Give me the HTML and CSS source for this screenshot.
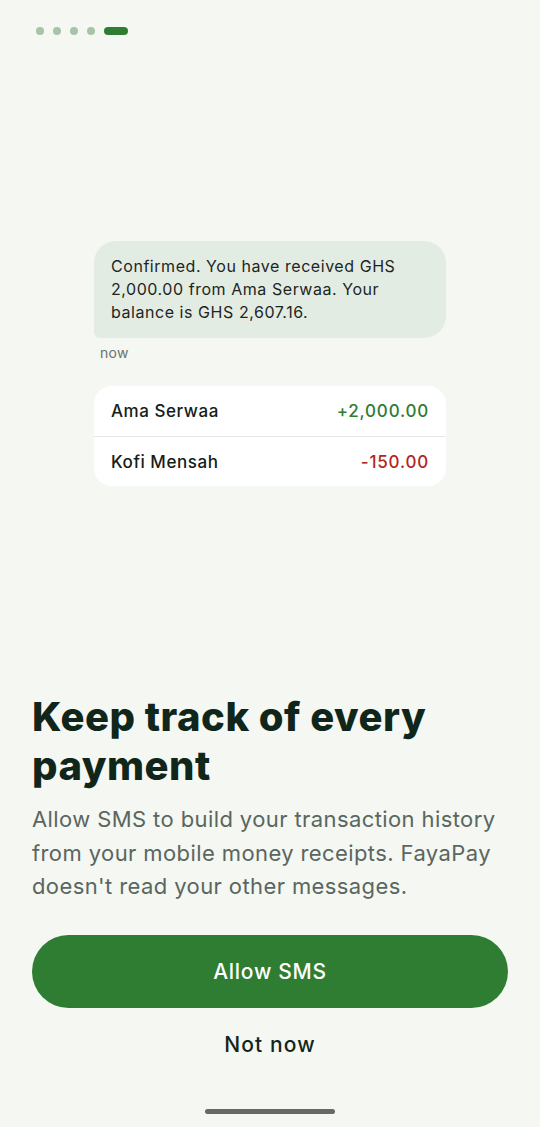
FILE: index.html
```html
<!DOCTYPE html>
<html lang="en">
<head>
<meta charset="utf-8">
<title>FayaPay SMS permission</title>
<link rel="stylesheet" href="styles.css">
</head>
<body>
<div class="screen">
  <div class="dots">
    <span class="dot"></span>
    <span class="dot"></span>
    <span class="dot"></span>
    <span class="dot"></span>
    <span class="dot active"></span>
  </div>

  <div class="illustration">
    <div class="bubble">Confirmed. You have received GHS 2,000.00 from Ama Serwaa. Your balance is GHS 2,607.16.</div>
    <div class="time">now</div>
    <div class="card">
      <div class="row">
        <span class="name">Ama Serwaa</span>
        <span class="amount plus">+2,000.00</span>
      </div>
      <div class="row">
        <span class="name">Kofi Mensah</span>
        <span class="amount minus">-150.00</span>
      </div>
    </div>
  </div>

  <h1 class="title">Keep track of every payment</h1>
  <p class="body">Allow SMS to build your transaction history from your mobile money receipts. FayaPay doesn't read your other messages.</p>

  <button class="primary">Allow SMS</button>
  <button class="secondary">Not now</button>

  <div class="home"></div>
</div>
</body>
</html>
```

FILE: styles.css
```css
* { box-sizing: border-box; }
html, body { margin: 0; padding: 0; }
body {
  background: #f4f7f2;
  font-family: Inter, "Noto Sans", "Liberation Sans", sans-serif;
  color: #13251a;
}
.screen {
  width: 540px;
  height: 1127px;
  padding: 27px 32px 0;
  display: flex;
  flex-direction: column;
  overflow: hidden;
}
.dots {
  display: flex;
  gap: 9px;
  padding-left: 4px;
  height: 8px;
}
.dot {
  width: 8px;
  height: 8px;
  border-radius: 50%;
  background: #a8c4a8;
}
.dot.active {
  width: 24px;
  border-radius: 4px;
  background: #2e7d32;
}
.illustration {
  margin: 206px auto 0;
  width: 352px;
}
.bubble {
  background: #e3ece3;
  border-radius: 22px 22px 22px 6px;
  padding: 14px 17px;
  font-size: 16px;
  line-height: 23px;
  letter-spacing: 0.55px;
  color: #1c261f;
}
.time {
  margin-top: 7px;
  padding-left: 6px;
  font-size: 14px;
  line-height: 16px;
  letter-spacing: 0.3px;
  color: #6b716c;
}
.card {
  margin-top: 25px;
  background: #ffffff;
  border-radius: 18px;
  overflow: hidden;
}
.row {
  display: flex;
  justify-content: space-between;
  align-items: center;
  height: 50px;
  padding: 0 17px;
  font-size: 17px;
  font-weight: 500;
}
.row + .row { border-top: 1px solid #e4e8e3; }
.name { color: #142018; letter-spacing: 0.55px; }
.amount { letter-spacing: 0.8px; }
.amount.plus { color: #2e7d32; }
.amount.minus { color: #b3261e; }
.title {
  margin: 206px 0 0;
  font-size: 40px;
  line-height: 49px;
  font-weight: 800;
  letter-spacing: 0.5px;
  color: #10261a;
}
.body {
  margin: 13px 0 0;
  font-size: 22px;
  line-height: 33.5px;
  letter-spacing: 0.4px;
  color: #5a665e;
}
.primary {
  margin-top: 31px;
  height: 73px;
  width: 100%;
  border: none;
  border-radius: 37px;
  background: #2e7d32;
  color: #ffffff;
  font-family: inherit;
  font-size: 21px;
  font-weight: 500;
  letter-spacing: 0.7px;
}
.secondary {
  margin-top: 24px;
  background: none;
  border: none;
  font-family: inherit;
  font-size: 21px;
  line-height: 26px;
  font-weight: 500;
  letter-spacing: 1.1px;
  color: #13251a;
  align-self: center;
  padding: 0;
}
.home {
  margin: 51px auto 0;
  width: 130px;
  height: 5px;
  border-radius: 3px;
  background: #666a66;
}
```
